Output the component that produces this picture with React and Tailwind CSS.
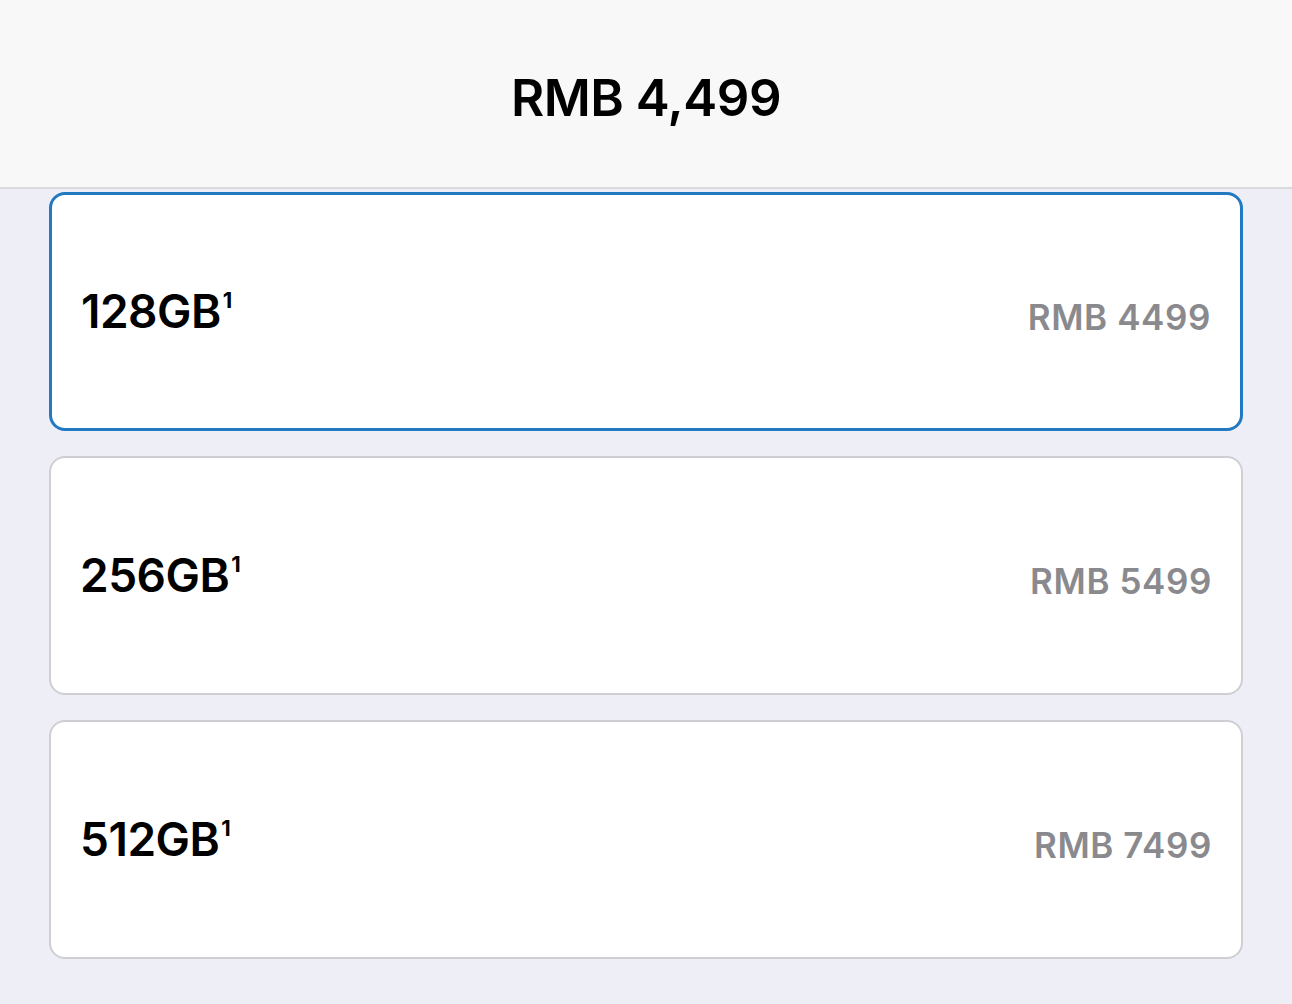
const options = [
  { size: "128GB", price: "RMB 4499", selected: true },
  { size: "256GB", price: "RMB 5499" },
  { size: "512GB", price: "RMB 7499" },
];

export default function App() {
  return (
    <div
      className="w-[1292px] h-[1004px] bg-[#eeeef7] overflow-hidden"
      style={{ fontFamily: "Inter, 'Liberation Sans', sans-serif" }}
    >
      {/* header */}
      <div className="h-[189px] bg-[#f8f8f8] border-b-2 border-[#dadada] flex items-center justify-center">
        <h1 className="text-[51px] font-semibold text-black tracking-[-0.5px] pt-[10px]">
          RMB 4,499
        </h1>
      </div>

      {/* storage options */}
      <div className="px-[49px] pt-[3px] flex flex-col gap-[25px]">
        {options.map((opt) => (
          <div
            key={opt.size}
            className={`h-[239px] rounded-[16px] bg-white flex items-center justify-between px-[29px] ${
              opt.selected ? "border-[3px] border-[#2279c2]" : "border-2 border-[#cfcfd3]"
            }`}
          >
            <span className="text-[46px] font-semibold text-black tracking-[-0.5px] -mt-[2px] leading-none">
              {opt.size}
              <span className="text-[22px] font-bold align-top relative top-[1px] ml-[2px]">1</span>
            </span>
            <span className="text-[35px] font-semibold text-[#8a8a8e] tracking-[0.6px] mt-[12px] leading-none">
              {opt.price}
            </span>
          </div>
        ))}
      </div>
    </div>
  );
}
